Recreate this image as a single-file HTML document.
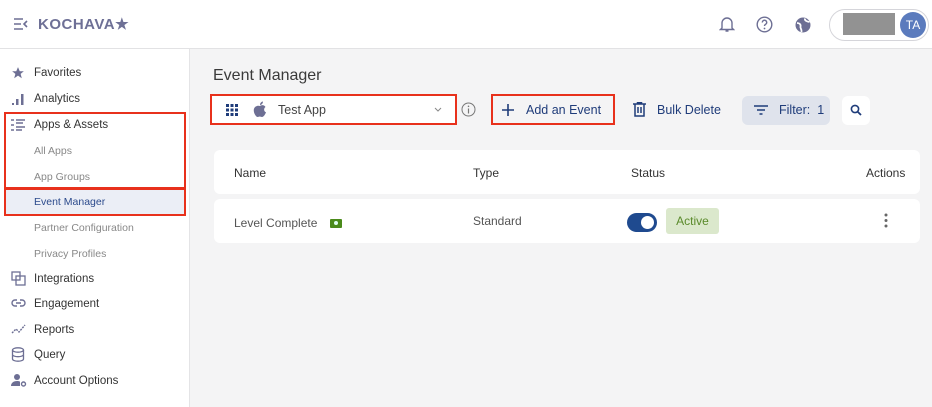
<!DOCTYPE html>
<html><head><style>
*{box-sizing:border-box;margin:0;padding:0}
body{width:932px;height:407px;overflow:hidden;font-family:"Liberation Sans",sans-serif;background:#f4f4f5;position:relative;color:#333}
.top{position:absolute;left:0;top:0;width:932px;height:49px;background:#fff;border-bottom:1px solid #e2e2e4}
.side{position:absolute;left:0;top:49px;width:190px;height:358px;background:#fff;border-right:1px solid #e4e4e6}
.it{position:absolute;left:34px;font-size:11.5px;color:#333}
.sub{position:absolute;left:34px;font-size:10.5px;color:#888}
.ic{position:absolute;left:11px}
.abs{position:absolute}
.red{position:absolute;border:2px solid #e8311c}
.card{position:absolute;left:214px;width:706px;background:#fff;border-radius:6px}
</style></head><body>
<div class="top">
 <svg class="abs" style="left:13px;top:18px" width="16" height="12" viewBox="0 0 16 12"><path d="M1 1h9M1 6h7M1 11h9M14 3l-3 3 3 3" stroke="#6d6f94" stroke-width="1.6" fill="none"/></svg>
 <div class="abs" style="left:38px;top:15px;font-size:15px;font-weight:bold;color:#6e7096;letter-spacing:.5px">KOCHAVA★</div>
 <svg class="abs" style="left:719px;top:15px" width="16" height="18" viewBox="0 0 16 18"><path d="M3 13V8a5 5 0 0110 0v5l1.5 1.5h-13zM6.5 16h3" stroke="#6d6f94" stroke-width="1.4" fill="none"/></svg>
 <svg class="abs" style="left:756px;top:16px" width="17" height="17" viewBox="0 0 17 17"><circle cx="8.5" cy="8.5" r="7.3" stroke="#6d6f94" stroke-width="1.4" fill="none"/><path d="M6.3 6.5a2.2 2.2 0 114 1.2c-.9.6-1.8 1-1.8 2.3" stroke="#6d6f94" stroke-width="1.4" fill="none"/><circle cx="8.5" cy="12.5" r=".9" fill="#6d6f94"/></svg>
 <svg class="abs" style="left:795px;top:17px" width="16" height="16" viewBox="0 0 16 16"><circle cx="8" cy="8" r="7.5" fill="#6d6f94"/><path d="M2 6c2.5 0 4 1.5 3.5 3.5S7 12 6.5 15M10 1.5c-.5 2 1.5 3 4.5 3.5" stroke="#fff" stroke-width="1.8" fill="none"/></svg>
 <div class="abs" style="left:829px;top:9px;width:100px;height:32px;border:1px solid #d5d5da;border-radius:16px;background:#fff"></div>
 <div class="abs" style="left:843px;top:13px;width:52px;height:22px;background:#929292"></div>
 <div class="abs" style="left:900px;top:12px;width:26px;height:26px;border-radius:50%;background:#5b7bbd;color:#fff;font-size:12px;line-height:26px;text-align:center">TA</div>
</div>
<div class="side">
 <svg class="ic" style="top:17px" width="14" height="14" viewBox="0 0 24 24"><path d="M12 2l3 7h7l-5.5 4.5 2 7.5-6.5-4.5-6.5 4.5 2-7.5L2 9h7z" fill="#6d6f94"/></svg>
 <div class="it" style="top:18px">Favorites</div>
 <svg class="ic" style="top:43px" width="14" height="14" viewBox="0 0 14 14"><rect x="1" y="11" width="2" height="2" fill="#6d6f94"/><rect x="5" y="7" width="2.5" height="6" fill="#6d6f94"/><rect x="10" y="2" width="2.5" height="11" fill="#6d6f94"/></svg>
 <div class="it" style="top:44px">Analytics</div>
 <svg class="ic" style="top:70px" width="15" height="12" viewBox="0 0 15 12"><path d="M0 1h3M0 6h3M0 11h3M5 1h9M5 4h7M5 8h9M5 11h6" stroke="#6d6f94" stroke-width="1.5"/></svg>
 <div class="it" style="top:70px">Apps &amp; Assets</div>
 <div class="sub" style="top:96px">All Apps</div>
 <div class="sub" style="top:122px">App Groups</div>
 <div class="abs" style="left:5px;top:140px;width:179px;height:25px;background:#ebeef6"></div>
 <div class="sub" style="top:147px;color:#2b4a8c">Event Manager</div>
 <div class="sub" style="top:173px">Partner Configuration</div>
 <div class="sub" style="top:199px">Privacy Profiles</div>
 <svg class="ic" style="top:222px" width="15" height="15" viewBox="0 0 15 15"><rect x="1" y="1" width="8" height="8" stroke="#6d6f94" fill="none" stroke-width="1.3"/><rect x="5" y="5" width="9" height="9" stroke="#6d6f94" fill="none" stroke-width="1.3"/></svg>
 <div class="it" style="top:224px">Integrations</div>
 <svg class="ic" style="top:249px" width="15" height="10" viewBox="0 0 15 10"><path d="M6 2H4a3 3 0 000 6h2M9 2h2a3 3 0 010 6H9M5 5h5" stroke="#6d6f94" stroke-width="1.4" fill="none"/></svg>
 <div class="it" style="top:249px">Engagement</div>
 <svg class="ic" style="top:273px" width="16" height="14" viewBox="0 0 16 14"><path d="M1 11l4-4 3 3 6-7" stroke="#6d6f94" stroke-width="1.4" fill="none" stroke-dasharray="2 1"/></svg>
 <div class="it" style="top:275px">Reports</div>
 <svg class="ic" style="top:298px" width="14" height="15" viewBox="0 0 14 15"><ellipse cx="7" cy="3" rx="5.5" ry="2.2" stroke="#6d6f94" fill="none" stroke-width="1.3"/><path d="M1.5 3v9c0 1.2 2.5 2.2 5.5 2.2s5.5-1 5.5-2.2V3M1.5 7.5c0 1.2 2.5 2.2 5.5 2.2s5.5-1 5.5-2.2" stroke="#6d6f94" fill="none" stroke-width="1.3"/></svg>
 <div class="it" style="top:300px">Query</div>
 <svg class="ic" style="top:324px" width="16" height="14" viewBox="0 0 16 14"><circle cx="6" cy="4" r="3" fill="#6d6f94"/><path d="M0 13c0-3 2.5-5 6-5s3 1 3 1v4z" fill="#6d6f94"/><circle cx="12.5" cy="11" r="2" stroke="#6d6f94" fill="none" stroke-width="1.4"/></svg>
 <div class="it" style="top:326px">Account Options</div>
</div>
<div class="red" style="left:4px;top:112px;width:182px;height:77px"></div>
<div class="red" style="left:4px;top:188px;width:182px;height:28px"></div>

<div class="abs" style="left:213px;top:67px;font-size:16px;color:#3a3a3a">Event Manager</div>
<div class="abs" style="left:210px;top:94px;width:247px;height:31px;background:#fff;border:2px solid #e8311c"></div>
<svg class="abs" style="left:225px;top:103px" width="14" height="14" viewBox="0 0 14 14" fill="#1f3c7a"><rect x="1" y="1" width="3" height="3"/><rect x="5.5" y="1" width="3" height="3"/><rect x="10" y="1" width="3" height="3"/><rect x="1" y="5.5" width="3" height="3"/><rect x="5.5" y="5.5" width="3" height="3"/><rect x="10" y="5.5" width="3" height="3"/><rect x="1" y="10" width="3" height="3"/><rect x="5.5" y="10" width="3" height="3"/><rect x="10" y="10" width="3" height="3"/></svg>
<svg class="abs" style="left:253px;top:101px" width="14" height="17" viewBox="0 0 14 17"><path d="M7 5c1-1 4-1.5 5.5 1-2 1.3-1.8 4.5.5 5.3C12 14 10.5 16 9 16c-1 0-1.5-.5-2.2-.5S5.5 16 4.6 16C3 16 .5 12 .8 8.8 1 5.5 4.5 4 7 5zM7 4c0-2 1.5-3.5 3-3.5C10 2.5 8.5 4 7 4z" fill="#6d6f94"/></svg>
<div class="abs" style="left:278px;top:103px;font-size:12.5px;color:#444">Test App</div>
<svg class="abs" style="left:434px;top:107px" width="8" height="5" viewBox="0 0 8 5"><path d="M1 1l3 3 3-3" stroke="#888" fill="none"/></svg>
<svg class="abs" style="left:461px;top:102px" width="15" height="15" viewBox="0 0 15 15"><circle cx="7.5" cy="7.5" r="6.5" stroke="#777" fill="none"/><path d="M7.5 6.5v5" stroke="#777" stroke-width="1.2"/><circle cx="7.5" cy="4.3" r=".8" fill="#777"/></svg>
<div class="abs" style="left:491px;top:94px;width:124px;height:31px;border:2px solid #e8311c"></div>
<svg class="abs" style="left:502px;top:104px" width="12" height="12" viewBox="0 0 12 12"><path d="M6 0v12M0 6h12" stroke="#1f3c7a" stroke-width="1.6"/></svg>
<div class="abs" style="left:526px;top:103px;font-size:12.5px;color:#1f3c7a">Add an Event</div>
<svg class="abs" style="left:633px;top:102px" width="13" height="15" viewBox="0 0 13 15"><path d="M0 2h13M4.5 2V.7h4V2M2 2v12h9V2M5 5v6M8 5v6" stroke="#1f3c7a" stroke-width="1.5" fill="none"/></svg>
<div class="abs" style="left:657px;top:103px;font-size:12.5px;color:#1f3c7a">Bulk Delete</div>
<div class="abs" style="left:742px;top:96px;width:88px;height:29px;background:#dfe3ec;border-radius:6px"></div>
<svg class="abs" style="left:754px;top:105px" width="14" height="10" viewBox="0 0 14 10"><path d="M0 1h14M3 5h8M5.5 9h3" stroke="#1f3c7a" stroke-width="1.5"/></svg>
<div class="abs" style="left:779px;top:103px;font-size:12.5px;color:#1f3c7a">Filter:&nbsp; 1</div>
<div class="abs" style="left:842px;top:96px;width:28px;height:29px;background:#fff;border-radius:6px"></div>
<svg class="abs" style="left:850px;top:104px" width="12" height="12" viewBox="0 0 12 12"><circle cx="5" cy="5" r="3.6" stroke="#1f3c7a" stroke-width="1.6" fill="none"/><path d="M7.7 7.7L11 11" stroke="#1f3c7a" stroke-width="1.8"/></svg>

<div class="card" style="top:150px;height:44px"></div>
<div class="abs" style="left:234px;top:166px;font-size:12px;color:#333">Name</div>
<div class="abs" style="left:473px;top:166px;font-size:12px;color:#333">Type</div>
<div class="abs" style="left:631px;top:166px;font-size:12px;color:#333">Status</div>
<div class="abs" style="left:866px;top:166px;font-size:12px;color:#333">Actions</div>
<div class="card" style="top:199px;height:44px"></div>
<div class="abs" style="left:234px;top:216px;font-size:12px;color:#555">Level Complete</div>
<div class="abs" style="left:330px;top:219px;width:12px;height:9px;background:#4a8a1a;border-radius:1px"><div style="margin:2px 4px;width:4px;height:4px;border-radius:50%;background:#dfe"></div></div>
<div class="abs" style="left:473px;top:214px;font-size:12px;color:#555">Standard</div>
<div class="abs" style="left:627px;top:213px;width:30px;height:19px;border-radius:10px;background:#1f4a8f"><div style="position:absolute;right:3px;top:3px;width:13px;height:13px;border-radius:50%;background:#fff"></div></div>
<div class="abs" style="left:666px;top:208px;width:53px;height:26px;background:#dbe8cc;border-radius:3px;color:#5a8a2a;font-size:12px;line-height:26px;text-align:center">Active</div>
<svg class="abs" style="left:884px;top:213px" width="4" height="15" viewBox="0 0 4 15" fill="#666"><circle cx="2" cy="2" r="1.5"/><circle cx="2" cy="7.5" r="1.5"/><circle cx="2" cy="13" r="1.5"/></svg>
</body></html>
